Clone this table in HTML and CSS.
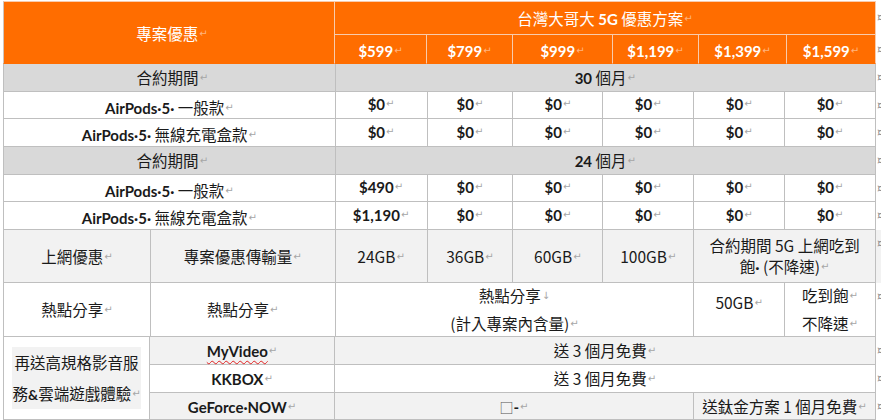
FILE: index.html
```html
<!DOCTYPE html>
<html lang="zh-Hant">
<head>
<meta charset="utf-8">
<title>台灣大哥大 5G 優惠方案</title>
<link rel="stylesheet" href="styles.css">
</head>
<body>
<div class="page">
  <div class="head">
    <div class="h-left"><span>專案優惠<span class="pm pm-o">↵</span></span></div>
    <div class="h-right">
      <div class="row">
        <div class="h-title"><span>台灣大哥大 <b class="lb">5G</b> 優惠方案<span class="pm pm-o">↵</span></span></div>
        <span class="rm">¤</span>
      </div>
      <div class="row">
        <div class="h-price hp1"><span><b class="lb">$599</b><span class="pm pm-o">↵</span></span></div>
        <div class="h-price hp2"><span><b class="lb">$799</b><span class="pm pm-o">↵</span></span></div>
        <div class="h-price hp3"><span><b class="lb">$999</b><span class="pm pm-o">↵</span></span></div>
        <div class="h-price hp4"><span><b class="lb">$1,199</b><span class="pm pm-o">↵</span></span></div>
        <div class="h-price hp5"><span><b class="lb">$1,399</b><span class="pm pm-o">↵</span></span></div>
        <div class="h-price hp6"><span><b class="lb">$1,599</b><span class="pm pm-o">↵</span></span></div>
        <span class="rm">¤</span>
      </div>
    </div>
  </div>

  <div class="row r28">
    <div class="cell first w-label gray"><span>合約期間<span class="pm">↵</span></span></div>
    <div class="cell w-span gray"><span><b class="lb">30</b> 個月<span class="pm">↵</span></span></div>
    <span class="rm">¤</span>
  </div>
  <div class="row r27">
    <div class="cell first w-label lbl"><span><b class="lb">AirPods·5·</b> 一般款<span class="pm">↵</span></span></div>
    <div class="cell p1 val"><span><b class="lb">$0</b><span class="pm">↵</span></span></div>
    <div class="cell p2 val"><span><b class="lb">$0</b><span class="pm">↵</span></span></div>
    <div class="cell p3 val"><span><b class="lb">$0</b><span class="pm">↵</span></span></div>
    <div class="cell p4 val"><span><b class="lb">$0</b><span class="pm">↵</span></span></div>
    <div class="cell p5 val"><span><b class="lb">$0</b><span class="pm">↵</span></span></div>
    <div class="cell p6 val"><span><b class="lb">$0</b><span class="pm">↵</span></span></div>
    <span class="rm">¤</span>
  </div>
  <div class="row r28">
    <div class="cell first w-label lbl"><span><b class="lb">AirPods·5·</b> 無線充電盒款<span class="pm">↵</span></span></div>
    <div class="cell p1 val"><span><b class="lb">$0</b><span class="pm">↵</span></span></div>
    <div class="cell p2 val"><span><b class="lb">$0</b><span class="pm">↵</span></span></div>
    <div class="cell p3 val"><span><b class="lb">$0</b><span class="pm">↵</span></span></div>
    <div class="cell p4 val"><span><b class="lb">$0</b><span class="pm">↵</span></span></div>
    <div class="cell p5 val"><span><b class="lb">$0</b><span class="pm">↵</span></span></div>
    <div class="cell p6 val"><span><b class="lb">$0</b><span class="pm">↵</span></span></div>
    <span class="rm">¤</span>
  </div>

  <div class="row r28">
    <div class="cell first w-label gray"><span>合約期間<span class="pm">↵</span></span></div>
    <div class="cell w-span gray"><span><b class="lb">24</b> 個月<span class="pm">↵</span></span></div>
    <span class="rm">¤</span>
  </div>
  <div class="row r27">
    <div class="cell first w-label lbl"><span><b class="lb">AirPods·5·</b> 一般款<span class="pm">↵</span></span></div>
    <div class="cell p1 val"><span><b class="lb">$490</b><span class="pm">↵</span></span></div>
    <div class="cell p2 val"><span><b class="lb">$0</b><span class="pm">↵</span></span></div>
    <div class="cell p3 val"><span><b class="lb">$0</b><span class="pm">↵</span></span></div>
    <div class="cell p4 val"><span><b class="lb">$0</b><span class="pm">↵</span></span></div>
    <div class="cell p5 val"><span><b class="lb">$0</b><span class="pm">↵</span></span></div>
    <div class="cell p6 val"><span><b class="lb">$0</b><span class="pm">↵</span></span></div>
    <span class="rm">¤</span>
  </div>
  <div class="row r28">
    <div class="cell first w-label lbl"><span><b class="lb">AirPods·5·</b> 無線充電盒款<span class="pm">↵</span></span></div>
    <div class="cell p1 val"><span><b class="lb">$1,190</b><span class="pm">↵</span></span></div>
    <div class="cell p2 val"><span><b class="lb">$0</b><span class="pm">↵</span></span></div>
    <div class="cell p3 val"><span><b class="lb">$0</b><span class="pm">↵</span></span></div>
    <div class="cell p4 val"><span><b class="lb">$0</b><span class="pm">↵</span></span></div>
    <div class="cell p5 val"><span><b class="lb">$0</b><span class="pm">↵</span></span></div>
    <div class="cell p6 val"><span><b class="lb">$0</b><span class="pm">↵</span></span></div>
    <span class="rm">¤</span>
  </div>

  <div class="row r53 light">
    <div class="cell first wa"><span>上網優惠<span class="pm">↵</span></span></div>
    <div class="cell wb"><span>專案優惠傳輸量<span class="pm">↵</span></span></div>
    <div class="cell p1"><span>24GB<span class="pm">↵</span></span></div>
    <div class="cell p2"><span>36GB<span class="pm">↵</span></span></div>
    <div class="cell p3"><span>60GB<span class="pm">↵</span></span></div>
    <div class="cell p4"><span>100GB<span class="pm">↵</span></span></div>
    <div class="cell w-pair ml ml21">
      <div>合約期間 5G 上網吃到</div>
      <div>飽<span class="dot">·</span> (不降速)<span class="pm">↵</span></div>
    </div>
    <span class="rm rm-top">¤</span>
  </div>

  <div class="row r54">
    <div class="cell first wa"><span>熱點分享<span class="pm">↵</span></span></div>
    <div class="cell wb"><span>熱點分享<span class="pm">↵</span></span></div>
    <div class="cell w-wide ml ml27">
      <div>熱點分享<span class="pm">↓</span></div>
      <div>(計入專案內含量)<span class="pm">↵</span></div>
    </div>
    <div class="cell p5 up8"><span>50GB<span class="pm">↵</span></span></div>
    <div class="cell p6 ml ml27">
      <div>吃到飽<span class="pm">↵</span></div>
      <div>不降速<span class="pm">↵</span></div>
    </div>
    <span class="rm rm-top">¤</span>
  </div>

  <div class="group">
    <div class="cell first wa promo">
      <div class="shade">
        <div>再送高規格影音服</div>
        <div>務<b class="lb amp">&amp;</b>雲端遊戲體驗<span class="pm">↵</span></div>
      </div>
    </div>
    <div class="group-rows">
      <div class="row r28">
        <div class="cell wb light"><span><b class="lb spell">MyVideo</b><span class="pm">↵</span></span></div>
        <div class="cell w-span light"><span>送 3 個月免費<span class="pm">↵</span></span></div>
        <span class="rm">¤</span>
      </div>
      <div class="row r28">
        <div class="cell wb"><span><b class="lb">KKBOX</b><span class="pm">↵</span></span></div>
        <div class="cell w-span"><span>送 3 個月免費<span class="pm">↵</span></span></div>
        <span class="rm">¤</span>
      </div>
      <div class="row r27">
        <div class="cell wb light"><span><b class="lb">GeForce·NOW</b><span class="pm">↵</span></span></div>
        <div class="cell w-wide light"><span><span class="box">□</span><b class="lb">-</b><span class="pm">↵</span></span></div>
        <div class="cell w-pair light"><span>送鈦金方案 1 個月免費<span class="pm">↵</span></span></div>
        <span class="rm">¤</span>
      </div>
    </div>
  </div>
</div>
</body>
</html>
```

FILE: styles.css
```css
html, body {
  margin: 0;
  padding: 0;
  background: #ffffff;
}

body {
  font-family: "Noto Sans CJK TC", "Noto Sans CJK SC", sans-serif;
  font-size: 15.5px;
  font-weight: 400;
  color: #1a1a1a;
  overflow: hidden;
}

.page {
  padding-top: 1px;
  padding-left: 3px;
  width: 878px;
}

.row {
  display: flex;
}

.lb {
  font-family: Lato, "Noto Sans CJK TC", sans-serif;
  font-weight: 700;
  font-size: 15px;
}

.amp {
  font-size: 14px;
}

.dot {
  font-family: Lato, sans-serif;
  font-weight: 700;
}

.pm {
  font-family: "DejaVu Sans", sans-serif;
  font-size: 10px;
  font-weight: normal;
  color: #a6a6a6;
  margin-left: 1px;
  vertical-align: 3px;
}

.pm-o {
  color: rgba(255, 255, 255, 0.5);
}

.rm {
  width: 4px;
  padding-left: 1px;
  overflow: hidden;
  font-family: "DejaVu Sans", sans-serif;
  font-size: 11px;
  color: #8a8a8a;
  display: flex;
  align-items: center;
  line-height: 12px;
}

.rm-top {
  align-items: flex-start;
  padding-top: 8px;
}

/* header */
.head {
  display: flex;
  color: #ffffff;
}

.h-left {
  box-sizing: border-box;
  width: 333px;
  height: 63px;
  background: #ff6d00;
  border-top: 1px solid #f8cbad;
  border-left: 1px solid #d0c4bc;
  border-right: 1px solid #f8cbad;
  border-bottom: 1px solid #ff6d00;
  display: flex;
  align-items: center;
  justify-content: center;
  padding-left: 6px;
}

.h-right {
  display: flex;
  flex-direction: column;
}

.h-title {
  box-sizing: border-box;
  width: 541px;
  height: 34px;
  background: #ff6d00;
  border-top: 1px solid #f8cbad;
  border-right: 1px solid #f8cbad;
  border-bottom: 1px solid #f8cbad;
  display: flex;
  align-items: center;
  justify-content: center;
  white-space: nowrap;
}

.h-price {
  box-sizing: border-box;
  height: 29px;
  background: #ff6d00;
  border-right: 1px solid #f8cbad;
  border-bottom: 1px solid #ff6d00;
  display: flex;
  align-items: center;
  justify-content: center;
  padding-top: 2px;
}

.hp1 { width: 92px; }
.hp2 { width: 86px; }
.hp3 { width: 100px; }
.hp4 { width: 86px; }
.hp5 { width: 88px; }
.hp6 { width: 89px; }

/* body cells */
.cell {
  box-sizing: border-box;
  border-right: 1px solid #bfbfbf;
  border-bottom: 1px solid #bfbfbf;
  display: flex;
  align-items: center;
  justify-content: center;
  text-align: center;
  white-space: nowrap;
  line-height: 20px;
}

.ml {
  flex-direction: column;
}

.first {
  border-left: 1px solid #bfbfbf;
}

.r27 > .cell { height: 27px; }
.r28 > .cell { height: 28px; }
.r53 > .cell { height: 53px; }
.r54 > .cell { height: 54px; }

.gray { background: #d9d9d9; }
.light, .light > .cell { background: #f2f2f2; }

.w-label.gray { padding-left: 6px; }
.lbl { padding-top: 4px; }
.val { padding-bottom: 3px; }
.up8 { padding-bottom: 14px; }

.w-label { width: 333px; }
.w-span { width: 541px; }
.wa { width: 148px; }
.wb { width: 185px; }
.p1 { width: 92px; }
.p2 { width: 86px; }
.p3 { width: 90px; }
.p4 { width: 91px; }
.p5 { width: 91px; }
.p6 { width: 91px; }
.w-wide { width: 359px; }
.w-pair { width: 182px; }

.ml21 { line-height: 21px; }
.ml27 { line-height: 26.5px; }

/* bottom group */
.group {
  display: flex;
}

.promo {
  height: 83px;
  background: #ffffff;
}

.shade {
  width: 129px;
  height: 62px;
  background: #f2f2f2;
  line-height: 31px;
  text-align: center;
}

.group-rows {
  display: flex;
  flex-direction: column;
}

.spell {
  text-decoration: underline wavy #e02020;
  text-decoration-thickness: 1px;
  text-underline-offset: 3px;
}

.box {
  color: #555555;
  font-size: 14px;
}
```
